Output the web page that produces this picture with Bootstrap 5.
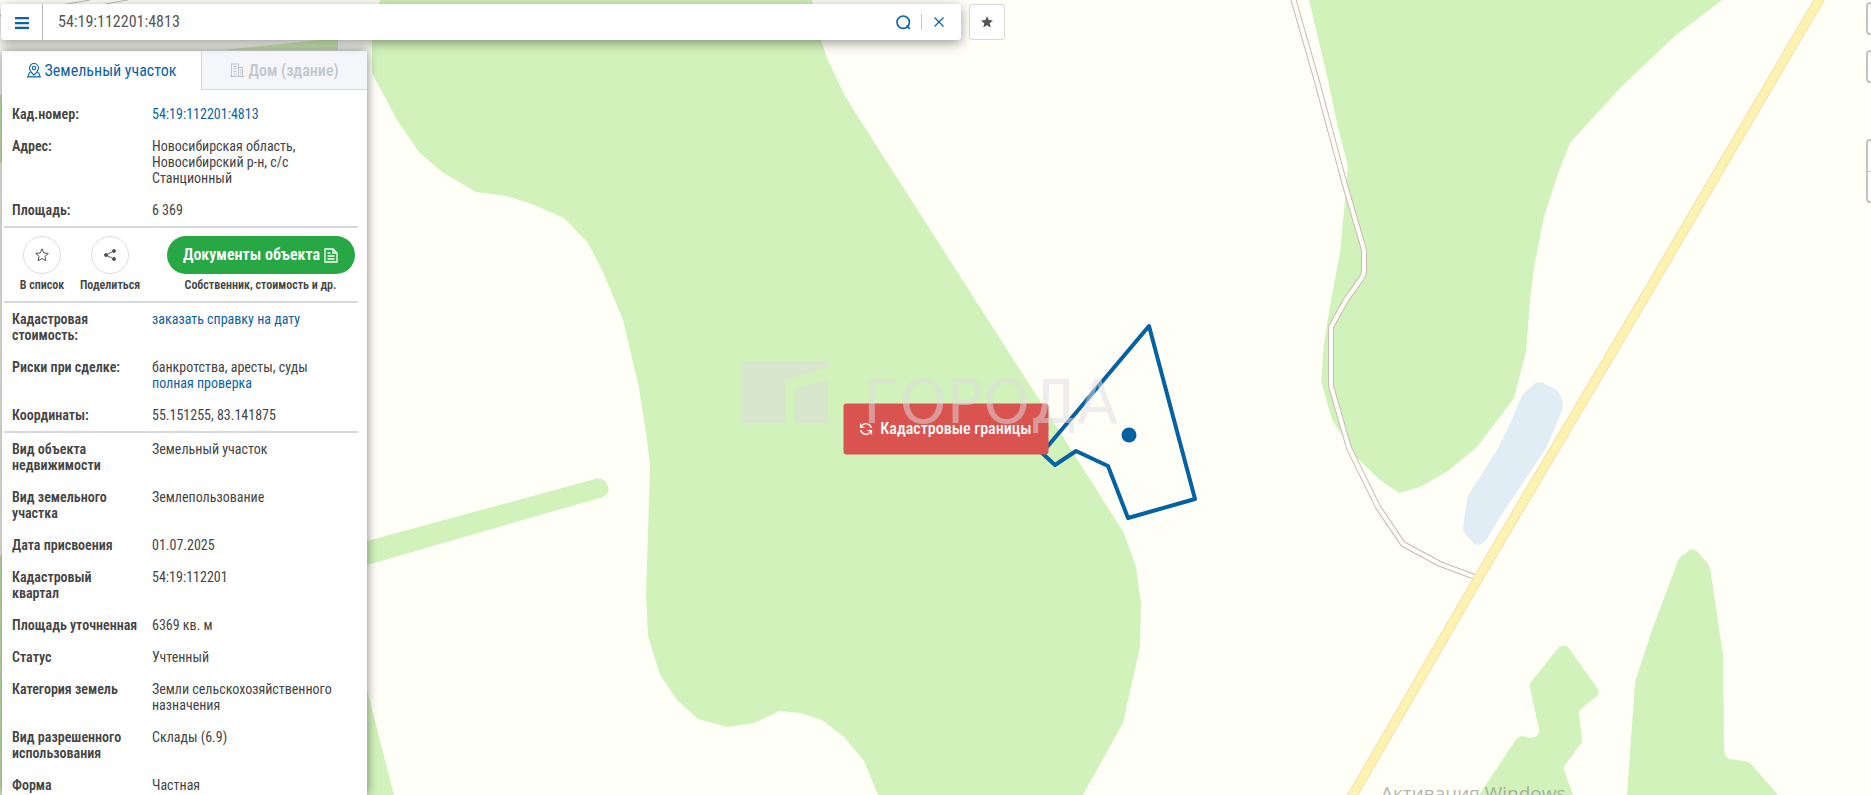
<!DOCTYPE html>
<html lang="ru">
<head>
<meta charset="utf-8">
<meta name="viewport" content="width=device-width, initial-scale=1">
<title>54:19:112201:4813</title>
<link href="https://cdn.jsdelivr.net/npm/bootstrap@5.3.0/dist/css/bootstrap.min.css" rel="stylesheet">
<style>
  body { font-family: "Roboto Condensed", "Liberation Sans Narrow", Roboto, sans-serif; font-size: 14px; line-height: 16px; color: #444; background: #fffff8; }
  a { color: #0b62a4; text-decoration: none; }
  button { color: inherit; }
  .map-layer { inset: 0; }
  .wood { fill: #d2f2bb; }
  .top-line { padding: 4px 0 0 1px; }
  .search-line { width: 960px; max-width: calc(100% - 60px); height: 36px; border-radius: 3px; box-shadow: 0 3px 12px rgba(0,0,0,.4); }
  .tool-btn { border: 0; background: none; padding: 0; color: #0b62a4; }
  .menu-btn { flex: 0 0 42px; border-right: 1px solid #bbb; }
  .search-input { font-size: 16px; color: #555; padding: 0 15px; }
  .search-input:focus { box-shadow: none; }
  .search-tools { padding-right: 17px; }
  .split-line { width: 1px; height: 16px; margin: 0 12px 0 10px; background: #c8c8c8; }
  .fav-btn { width: 36px; height: 36px; border: 1px solid #d8d8d8; border-radius: 3px; color: #555; }
  .object-panel { width: 365px; margin: 11px 0 0 2px; box-shadow: 0 0 10px rgba(0,0,0,.5); }
  .tab-btn { height: 39px; border: 0; font-size: 16px; }
  .tab-btn span { padding-top: 1px; }
  .tab-on { flex: 0 0 199px; color: #0b62a4; background: #fff; }
  .tab-off { color: #c2c5cb; background: #f5f6fa; border-left: 1px solid #d5d7dc; border-bottom: 1px solid #d5d7dc; font-weight: 500; }
  .prop { padding: 8px 0 8px 10px; }
  .prop dt { flex: 0 0 140px; padding-right: 30px; font-weight: 600; }
  .prop .one-line { padding-right: 0; }
  .prop dd { padding-right: 24px; }
  .rule { margin: 0 9px 0 2px; border-top: 2px solid #d5d8dc; opacity: 1; }
  .action { gap: 3px; flex: 0 0 80px; min-width: 0; }
  .action-share { flex-basis: 56px; }
  .action-docs { flex: 1; padding-left: 16px; }
  .round-btn { width: 38px; height: 38px; border: 1px solid #ddd; background: #fff; color: #555; }
  .caption-text { font-size: 12px; font-weight: 600; }
  .docs-btn { width: 188px; height: 38px; border: 0; background: #28a745; color: #fff; font-size: 16px; font-weight: 600; }
  .borders-btn { left: calc(50% + 10px); top: calc(50% + 31px); transform: translate(-50%, -50%); width: 205px; height: 51px; border: 0; border-radius: 3px; background: #d9534f; color: #fff; font-size: 16px; font-weight: 500; }
  .map-tools { top: 2px; right: -29px; }
  .edge-btn { width: 34px; height: 33px; background: #fff; border: 2px solid #c4c4c4; border-radius: 4px; }
  .line-btn { margin-top: 15px; }
  .zoom-pair { margin-top: 56px; }
  .zoom-pair .edge-btn { height: 32px; }
  .zoom-pair .edge-btn + .edge-btn { border-top-width: 1px; }
</style>
</head>
<body class="vh-100 overflow-hidden position-relative">

<main class="position-absolute map-layer">
  <svg class="w-100 h-100 d-block" viewBox="0 0 1871 795" preserveAspectRatio="xMidYMid slice" role="img" aria-label="Карта">
    <g class="wood">
      <path d="M380 0 372 40V73L397 120 419 152 442 172 476 192 506 196 532 204 564 218 588 243 603 272 623 320 639 388 647 440 650 465 646 595 648 636 660 675 677 700 698 719 728 727 754 723 779 711 800 713 822 720 844 737 864 761 878 795H1083L1123 723 1140 647 1141 603 1136 567 1124 533 1065 440 860 120 845 96 827 58 821 40 812 0Z"/>
      <path d="M223 50 338 38V50ZM0 95H3V163H0ZM0 555H3V795H0Z"/>
      <path d="M360 543 595 479Q602 477 606 482 610 489 608 492 607 495 603 497L360 567ZM367 690 394 795H360Z"/>
      <path d="M1309 0 1328 80 1338 128 1348 166 1345 200 1340 253 1331 300 1324 343 1321 381 1332 420 1342 435 1357 458 1380 480 1399 493 1420 487 1448 471 1477 447 1514 398 1526 352 1530 300 1534 267 1544 217 1559 171 1570 143 1621 87 1675 36 1722 0Z"/>
      <path d="M1479 795 1513 744Q1517 736 1523 736L1530 738Q1540 737 1539 729L1530 688Q1529 685 1531 682L1559 647Q1563 644 1568 647L1597 688Q1600 692 1597 696L1581 709Q1578 711 1579 714L1582 740Q1582 743 1580 745L1565 765Q1563 768 1564 770L1573 795Z"/>
      <path d="M1627 795 1635 682 1651 633 1677 563Q1679 557 1683 555L1690 550Q1693 548 1698 552L1708 564Q1711 569 1711 574L1723 655 1724 750Q1725 758 1730 759L1744 761Q1748 761 1751 764L1778 795Z"/>
    </g>
    <path fill="#e0edf4" d="M1467 500Q1467 497 1469 494L1497 450 1510 424 1520 400Q1522 395 1525 392L1534 384Q1538 381 1543 383L1555 389Q1560 392 1561 397L1563 403Q1562 411 1561 413L1548 444 1543 453 1500 517 1486 540Q1480 547 1474 544L1465 534Q1463 531 1463 528Z"/>
    <path fill="none" stroke="#b9b9b4" d="M55 6 90 0M105 4 128 0M0 16 4 15"/>
    <path fill="none" stroke="#cdb8b2" stroke-width="6" stroke-linejoin="round" d="M1293 -2 1316 78 1345 185 1362 243Q1364 248 1364 252V271Q1364 275 1361 279L1346 300 1331 327V386L1349 448 1378 507 1403 544 1440 564 1475 577"/>
    <path fill="none" stroke="#fffefa" stroke-width="4" stroke-linejoin="round" d="M1293 -2 1316 78 1345 185 1362 243Q1364 248 1364 252V271Q1364 275 1361 279L1346 300 1331 327V386L1349 448 1378 507 1403 544 1440 564 1475 577"/>
    <path fill="none" stroke="#f1e0b0" stroke-width="10" d="M1822 -5 1643 300 1489 560 1348 803"/>
    <path fill="none" stroke="#fdf3b0" stroke-width="8" d="M1822 -5 1643 300 1489 560 1348 803"/>
    <path fill="none" stroke="#0461a2" stroke-width="4" stroke-linejoin="round" d="M1149 326 1195 499 1128 518 1108 466 1076 451 1055 465 1042 453Z"/>
    <circle cx="1129" cy="435" r="7.500" fill="#0461a2"/>
    <text x="1381" y="800" font-family="Open Sans, Noto Sans, sans-serif" font-size="19" fill="#8a8a8a" fill-opacity=".65">Активация Windows</text>
  </svg>
  <button type="button" class="borders-btn position-absolute d-flex align-items-center justify-content-center gap-2">
    <svg width="13" height="13" viewBox="0 0 13 13" fill="none" stroke="currentColor" stroke-width="1.300" aria-hidden="true"><path d="M11.800 5.500A5.400 5.400 0 0 0 2.300 3.200L1 4.600M1 1v3.800h3.800M1.200 7.500a5.400 5.400 0 0 0 9.500 2.300L12 8.400M12 12V8.200H8.200"/></svg>
    <span>Кадастровые границы</span>
  </button>
  <svg class="position-absolute map-layer w-100 h-100 pe-none" viewBox="0 0 1871 795" preserveAspectRatio="xMidYMid slice" fill="#dedbe0" fill-opacity=".52">
    <path d="M741 361H828V367L785 380V423H741ZM795 389 828 379V423H795Z"/>
    <text x="863" y="423" font-family="DejaVu Sans, sans-serif" font-size="60">ГОРОДА</text>
  </svg>
</main>

<div class="position-relative d-flex flex-column h-100 align-items-start pe-none">
  <header class="top-line d-flex w-100 gap-2 z-1">
    <form class="search-line d-flex align-items-center bg-white pe-auto" role="search">
      <button type="button" class="tool-btn menu-btn h-100" aria-label="Меню">
        <svg width="14" height="12" viewBox="0 0 14 12" fill="currentColor"><path d="M0 0h14v2.200H0zM0 5h14v2.200H0zM0 9.800h14V12H0z"/></svg>
      </button>
      <input class="search-input form-control border-0 shadow-none bg-transparent flex-fill" type="text" aria-label="Поиск" value="54:19:112201:4813">
      <div class="search-tools d-flex align-items-center">
        <button type="submit" class="tool-btn d-flex" aria-label="Найти">
          <svg width="15" height="15" viewBox="0 0 15 15" fill="none" stroke="currentColor" stroke-width="1.600"><circle cx="7.200" cy="7.200" r="6.200"/><path d="m10.500 10.500 3.400 3.400"/></svg>
        </button>
        <span class="split-line"></span>
        <button type="reset" class="tool-btn d-flex" aria-label="Очистить">
          <svg width="10" height="10" viewBox="0 0 10 10" fill="none" stroke="currentColor" stroke-width="1.200"><path d="m.5.5 9 9m0-9-9 9"/></svg>
        </button>
      </div>
    </form>
    <button type="button" class="fav-btn bg-white p-0 d-flex align-items-center justify-content-center pe-auto" aria-label="Избранное">
      <svg width="12" height="12" viewBox="0 0 12 12" fill="currentColor"><path d="m6 0 1.700 4 4.300.4-3.300 2.800 1 4.400L6 9.300l-3.700 2.300 1-4.400L0 4.400 4.300 4z"/></svg>
    </button>
  </header>

  <aside class="object-panel bg-white flex-fill overflow-hidden pe-auto">
    <div class="d-flex" role="tablist">
      <button type="button" role="tab" aria-selected="true" class="tab-btn tab-on p-0 d-flex align-items-center justify-content-center gap-1">
        <svg width="14" height="15" viewBox="0 0 14 15" fill="none" stroke="currentColor" stroke-width="1.100" aria-hidden="true"><path d="M7 12.200C4 9.300 2.500 7.200 2.500 5a4.500 4.500 0 0 1 9 0c0 2.200-1.500 4.300-4.500 7.200zM3.500 9.500 2.300 10 .7 13.900h12.600L11.700 10l-1.200-.5"/><circle cx="7" cy="5" r="1.700"/></svg>
        <span>Земельный участок</span>
      </button>
      <button type="button" role="tab" aria-selected="false" class="tab-btn tab-off flex-fill p-0 d-flex align-items-center justify-content-center gap-1">
        <svg width="14" height="14" viewBox="0 0 14 14" fill="none" stroke="currentColor" stroke-width="1.100" aria-hidden="true"><path d="M1.500 13V1h7v12M8.500 4.500h4V13M0 13.400h14M3.500 3.500h3M3.500 6h3M3.500 8.500h3M3.500 11h3M10 7h1.500M10 9h1.500M10 11h1.500"/></svg>
        <span>Дом (здание)</span>
      </button>
    </div>

    <dl class="m-0 pt-2">
      <div class="prop d-flex"><dt>Кад.номер:</dt><dd class="m-0"><a href="#">54:19:112201:4813</a></dd></div>
      <div class="prop d-flex"><dt>Адрес:</dt><dd class="m-0">Новосибирская область,<br>Новосибирский р-н, с/с<br>Станционный</dd></div>
      <div class="prop d-flex"><dt>Площадь:</dt><dd class="m-0">6 369</dd></div>
    </dl>
    <hr class="rule">
    <div class="d-flex align-items-start text-center py-2">
      <div class="action d-flex flex-column align-items-center">
        <button type="button" class="round-btn rounded-circle p-0 d-flex align-items-center justify-content-center" aria-labelledby="to-list-text">
          <svg width="14" height="14" viewBox="0 0 14 14" fill="none" stroke="currentColor" stroke-linejoin="round"><path d="m7 .8 1.800 4.200 4.500.4-3.400 3 1 4.500L7 10.500l-3.900 2.400 1-4.500-3.400-3L5.200 5z"/></svg>
        </button>
        <span id="to-list-text" class="caption-text">В список</span>
      </div>
      <div class="action action-share d-flex flex-column align-items-center">
        <button type="button" class="round-btn rounded-circle p-0 d-flex align-items-center justify-content-center" aria-labelledby="share-text">
          <svg width="12" height="12" viewBox="0 0 12 12" fill="currentColor" stroke="currentColor"><path d="M10 2 2 6l8 4" fill="none"/><circle cx="10" cy="2" r="1.500"/><circle cx="2" cy="6" r="1.500"/><circle cx="10" cy="10" r="1.500"/></svg>
        </button>
        <span id="share-text" class="caption-text">Поделиться</span>
      </div>
      <div class="action action-docs d-flex flex-column align-items-center">
        <button type="button" class="docs-btn rounded-pill d-flex align-items-center justify-content-center gap-1 p-0">
          <span>Документы объекта</span>
          <svg width="14" height="15" viewBox="0 0 14 15" fill="none" stroke="currentColor" stroke-width="1.300" aria-hidden="true"><path d="M1 1h8l4 4v9H1zM9 1v4h4M3.500 5H6.500M3.500 8h7M3.500 11h7"/></svg>
        </button>
        <span class="caption-text">Собственник, стоимость и др.</span>
      </div>
    </div>
    <hr class="rule">
    <dl class="m-0">
      <div class="prop d-flex"><dt>Кадастровая стоимость:</dt><dd class="m-0"><a href="#">заказать справку на дату</a></dd></div>
      <div class="prop d-flex"><dt class="one-line">Риски при сделке:</dt><dd class="m-0">банкротства, аресты, суды<br><a href="#">полная проверка</a></dd></div>
      <div class="prop d-flex"><dt>Координаты:</dt><dd class="m-0">55.151255, 83.141875</dd></div>
    </dl>
    <hr class="rule">
    <dl class="m-0">
      <div class="prop d-flex"><dt>Вид объекта недвижимости</dt><dd class="m-0">Земельный участок</dd></div>
      <div class="prop d-flex"><dt>Вид земельного участка</dt><dd class="m-0">Землепользование</dd></div>
      <div class="prop d-flex"><dt class="one-line">Дата присвоения</dt><dd class="m-0">01.07.2025</dd></div>
      <div class="prop d-flex"><dt>Кадастровый квартал</dt><dd class="m-0">54:19:112201</dd></div>
      <div class="prop d-flex"><dt class="one-line">Площадь уточненная</dt><dd class="m-0">6369 кв. м</dd></div>
      <div class="prop d-flex"><dt>Статус</dt><dd class="m-0">Учтенный</dd></div>
      <div class="prop d-flex"><dt class="one-line">Категория земель</dt><dd class="m-0">Земли сельскохозяйственного назначения</dd></div>
      <div class="prop d-flex"><dt>Вид разрешенного использования</dt><dd class="m-0">Склады (6.9)</dd></div>
      <div class="prop d-flex"><dt>Форма</dt><dd class="m-0">Частная</dd></div>
    </dl>
  </aside>
</div>

<nav class="map-tools position-absolute d-flex flex-column" aria-label="Инструменты карты">
  <button type="button" class="edge-btn" aria-label="Слои"></button>
  <button type="button" class="edge-btn line-btn" aria-label="Линейка"></button>
  <div class="zoom-pair d-flex flex-column">
    <button type="button" class="edge-btn rounded-bottom-0 border-bottom-0" aria-label="Приблизить"></button>
    <button type="button" class="edge-btn rounded-top-0" aria-label="Отдалить"></button>
  </div>
</nav>

<script src="https://cdn.jsdelivr.net/npm/bootstrap@5.3.0/dist/js/bootstrap.bundle.min.js"></script>
</body>
</html>
